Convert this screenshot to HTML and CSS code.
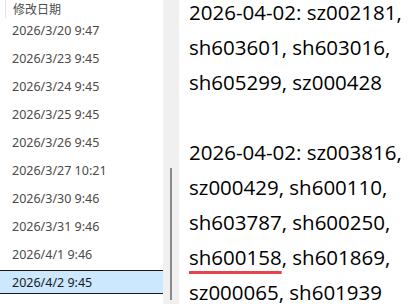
FILE: index.html
```html
<!DOCTYPE html>
<html lang="zh-CN">
<head>
    <meta charset="UTF-8">
    <meta name="viewport" content="width=device-width, initial-scale=1.0">
    <title>修改日期</title>
    <link rel="stylesheet" href="styles.css">
</head>
<body>

    <div class="window">
        <div class="files">
            <div class="header">修改日期</div>
            <div class="row">2026/3/20 9:47</div>
            <div class="row">2026/3/23 9:45</div>
            <div class="row">2026/3/24 9:45</div>
            <div class="row">2026/3/25 9:45</div>
            <div class="row">2026/3/26 9:45</div>
            <div class="row">2026/3/27 10:21</div>
            <div class="row">2026/3/30 9:46</div>
            <div class="row">2026/3/31 9:46</div>
            <div class="row">2026/4/1 9:46</div>
            <div class="row selected">2026/4/2 9:45</div>
        </div>

        <div class="scroll">
            <div class="thumb"></div>
        </div>

        <div class="note">
            <p>2026-04-02: sz002181, sh603601, sh603016, sh605299, sz000428</p>
            <p>2026-04-02: sz003816, sz000429, sh600110, sh603787, sh600250, <span class="mark">sh600158</span>, sh601869, sz000065, sh601939</p>
        </div>
    </div>

</body>
</html>
```

FILE: styles.css
```css
* {
    margin: 0;
    padding: 0;
    box-sizing: border-box;
}

body {
    background-color: #fff;
    width: 415px;
    height: 304px;
    overflow: hidden;
}

.window {
    display: flex;
    height: 304px;
}

.files {
    width: 163px;
    font-family: 'Noto Sans', 'Noto Sans CJK SC', sans-serif;
    font-size: 12.5px;
    color: #4a4a4a;
}

.header {
    height: 18px;
    line-height: 20px;
    margin-left: 5px;
    padding-left: 7px;
    border-left: 1px solid #e3e3e3;
    color: #4d4d4d;
    font-size: 12px;
}

.row {
    height: 24px;
    line-height: 20px;
    padding-top: 2px;
    margin-bottom: 4px;
    padding-left: 12px;
    border-top: 1px solid transparent;
    border-bottom: 1px solid transparent;
}

.row.selected {
    background-color: #cce8ff;
    border-color: #1a1a1a;
    color: #1a1a1a;
}

.scroll {
    width: 16px;
    background-color: #f0f0f0;
    padding-top: 168px;
}

.thumb {
    width: 2px;
    height: 132px;
    margin-left: 7px;
    background-color: #8a8a8a;
}

.note {
    flex: 1;
    padding-left: 10px;
    font-family: 'Open Sans', 'Noto Sans CJK SC', sans-serif;
    font-size: 20.5px;
    line-height: 35px;
    color: #000;
    margin-top: -5px;
}

.note p {
    margin-bottom: 35px;
}

.mark {
    text-decoration: underline;
    text-decoration-color: #e8434a;
    text-decoration-thickness: 3px;
    text-underline-offset: 6px;
}
```
